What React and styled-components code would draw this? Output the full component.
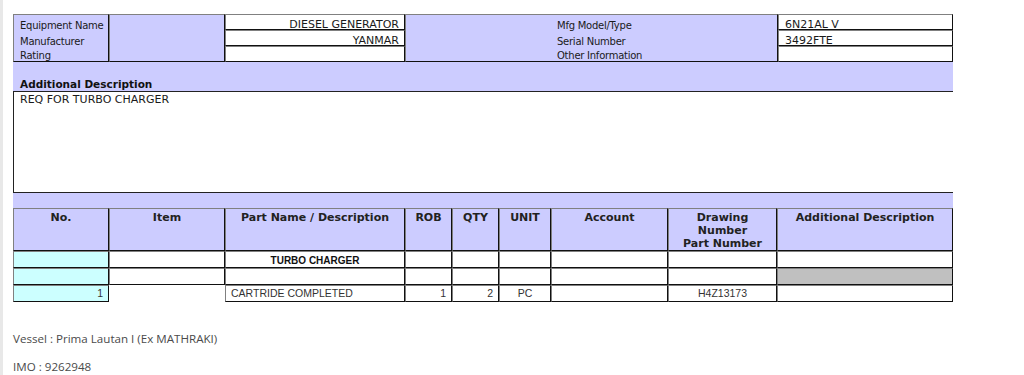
import React from "react";
import styled, { createGlobalStyle } from "styled-components";

const GlobalStyle = createGlobalStyle`
	body {
		margin: 0;
		background: #fff;
	}
`;

const equipment = [
	{ label: "Equipment Name", value: "DIESEL GENERATOR", otherLabel: "Mfg Model/Type", otherValue: "6N21AL V" },
	{ label: "Manufacturer", value: "YANMAR", otherLabel: "Serial Number", otherValue: "3492FTE" },
	{ label: "Rating", value: "", otherLabel: "Other Information", otherValue: "" },
];

const headers = ["No.", "Item", "Part Name / Description", "ROB", "QTY", "UNIT", "Account", ["Drawing", "Number", "Part Number"], "Additional Description"];

const App = () => {
	return (
		<Page>
			<GlobalStyle />
			<Sheet>
				<Grid>
					<colgroup>
						<col width="96" />
						<col width="116" />
						<col width="180" />
						<col width="373" />
						<col width="175" />
					</colgroup>
					<tbody>
						{equipment.map((row, i) => (
							<tr key={row.label}>
								{i === 0 && (
									<LabelCell rowSpan={3} $indent={6}>
										{equipment.map((r) => (
											<LabelLine key={r.label}>{r.label}</LabelLine>
										))}
									</LabelCell>
								)}
								{i === 0 && <LabelCell rowSpan={3} />}
								<ValueCell $align="right">{row.value}</ValueCell>
								{i === 0 && (
									<LabelCell rowSpan={3} $indent={151}>
										{equipment.map((r) => (
											<LabelLine key={r.otherLabel}>{r.otherLabel}</LabelLine>
										))}
									</LabelCell>
								)}
								<ValueCell $align="left">{row.otherValue}</ValueCell>
							</tr>
						))}
					</tbody>
				</Grid>

				<SectionTitle>Additional Description</SectionTitle>
				<DescBox>REQ FOR TURBO CHARGER</DescBox>
				<Spacer />

				<Grid>
					<colgroup>
						<col width="96" />
						<col width="116" />
						<col width="180" />
						<col width="47" />
						<col width="47" />
						<col width="52" />
						<col width="117" />
						<col width="109" />
						<col width="176" />
					</colgroup>
					<thead>
						<tr>
							{headers.map((h, i) => (
								<HeadCell key={i}>
									{Array.isArray(h) ? h.map((line) => <div key={line}>{line}</div>) : h}
								</HeadCell>
							))}
						</tr>
					</thead>
					<tbody>
						<tr>
							<PartCell $bg="#ccffff" />
							<PartCell />
							<PartCell $align="center">
								<GroupName>TURBO CHARGER</GroupName>
							</PartCell>
							<PartCell />
							<PartCell />
							<PartCell />
							<PartCell />
							<PartCell />
							<PartCell />
						</tr>
						<tr>
							<PartCell $bg="#ccffff" />
							<PartCell />
							<PartCell />
							<PartCell />
							<PartCell />
							<PartCell />
							<PartCell />
							<PartCell />
							<PartCell $bg="#c0c0c0" />
						</tr>
						<tr>
							<PartCell $bg="#ccffff" $align="right">1</PartCell>
							<PartCell $bare />
							<PartCell>CARTRIDE COMPLETED</PartCell>
							<PartCell $align="right">1</PartCell>
							<PartCell $align="right">2</PartCell>
							<PartCell $align="center">PC</PartCell>
							<PartCell />
							<PartCell $align="center">H4Z13173</PartCell>
							<PartCell />
						</tr>
					</tbody>
				</Grid>
			</Sheet>

			<Footer>
				<FooterLine>Vessel : Prima Lautan I (Ex MATHRAKI)</FooterLine>
				<FooterLine>IMO : 9262948</FooterLine>
			</Footer>
		</Page>
	);
};

const Page = styled.div`
	min-height: 100vh;
	box-sizing: border-box;
	border-left: 3px solid #e8e8e8;
	padding: 14px 0 0 10px;
`;

const Sheet = styled.div`
	width: 940px;
	background: #ccccff;
`;

const Grid = styled.table`
	width: 940px;
	table-layout: fixed;
	border-collapse: separate;
	border-spacing: 0;
	color: #222;
`;

const Cell = styled.td`
	border: 1px solid;
	border-color: #808080 #111 #111 #808080;
	padding: 0;
	overflow: hidden;
	white-space: nowrap;
`;

const LabelCell = styled(Cell)`
	background: #ccccff;
	vertical-align: top;
	padding: 3px 0 0 ${(p) => p.$indent || 0}px;
	font-family: "DejaVu Sans", Verdana, sans-serif;
	font-size: 10px;
	letter-spacing: -0.25px;
	color: #1a1a1a;
`;

const LabelLine = styled.div`
	height: 16px;
	line-height: 16px;

	&:last-child {
		height: 11px;
		line-height: 11px;
	}
`;

const ValueCell = styled(Cell)`
	background: #fff;
	height: 8px;
	padding: 6px 5px 0 6px;
	line-height: 8px;
	text-align: ${(p) => p.$align};
	font-family: "DejaVu Sans", Verdana, sans-serif;
	font-size: 11px;
	color: #1a1a1a;
`;

const SectionTitle = styled.div`
	padding: 16px 0 0 7px;
	line-height: 13px;
	font-family: "DejaVu Sans", Verdana, sans-serif;
	font-size: 10.5px;
	font-weight: bold;
	color: #111;
`;

const DescBox = styled.div`
	height: 99px;
	background: #fff;
	border: 1px solid #222;
	border-right: none;
	padding: 1px 0 0 6px;
	box-sizing: content-box;
	line-height: 14px;
	font-family: "DejaVu Sans", Verdana, sans-serif;
	font-size: 11px;
	color: #1a1a1a;
`;

const Spacer = styled.div`
	height: 15px;
`;

const HeadCell = styled(Cell).attrs({ as: "th" })`
	background: #ccccff;
	height: 39px;
	padding-top: 2px;
	vertical-align: top;
	text-align: center;
	line-height: 13px;
	font-family: "DejaVu Sans", Verdana, sans-serif;
	font-size: 11px;
	font-weight: bold;
	color: #222;
`;

const PartCell = styled(Cell)`
	background: ${(p) => p.$bg || "#fff"};
	height: 15px;
	line-height: 15px;
	text-align: ${(p) => p.$align || "left"};
	padding: 0 5px;
	font-family: "Liberation Sans", Arial, sans-serif;
	font-size: 10.5px;
	color: #333;
	${(p) => p.$bare && "border-color: transparent;"}
`;

const GroupName = styled.span`
	position: relative;
	top: 1px;
	font-weight: bold;
	font-size: 10px;
	color: #111;
`;

const Footer = styled.div`
	padding-top: 29px;
	font-family: "Open Sans", "Noto Sans", sans-serif;
	font-size: 11.6px;
	color: #4a4a4a;
`;

const FooterLine = styled.p`
	margin: 0 0 12px;
	line-height: 16px;
`;

export default App;
